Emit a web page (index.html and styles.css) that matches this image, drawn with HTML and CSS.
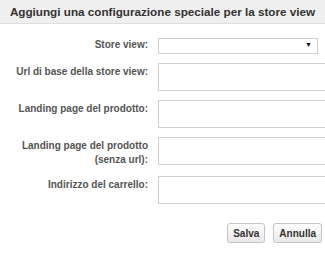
FILE: index.html
```html
<!DOCTYPE html>
<html lang="it">
<head>
    <meta charset="UTF-8">
    <meta name="viewport" content="width=device-width, initial-scale=1.0">
    <title>Store view</title>
    <link rel="stylesheet" href="styles.css">
</head>
<body>
    <div class="dialog">
        <div class="dialog-title">Aggiungi una configurazione speciale per la store view</div>

        <form class="config-form">
            <div class="field-row small">
                <label for="storeView">Store view:</label>
                <div class="select-box" id="storeView">
                    <span class="arrow">&#9660;</span>
                </div>
            </div>
            <div class="field-row">
                <label for="baseUrl">Url di base della store view:</label>
                <input type="text" id="baseUrl">
            </div>
            <div class="field-row">
                <label for="landing">Landing page del prodotto:</label>
                <input type="text" id="landing">
            </div>
            <div class="field-row">
                <label for="landingNoUrl">Landing page del prodotto<br>(senza url):</label>
                <input type="text" id="landingNoUrl">
            </div>
            <div class="field-row">
                <label for="cart">Indirizzo del carrello:</label>
                <input type="text" id="cart">
            </div>

            <div class="buttons">
                <button type="button">Salva</button>
                <button type="button">Annulla</button>
            </div>
        </form>
    </div>
</body>
</html>
```

FILE: styles.css
```css
html, body {
    overflow: hidden;
}
body {
    margin: 0;
    font-family: "Liberation Sans", Arial, sans-serif;
    background: white;
    color: #333;
}
.dialog-title {
    background: #efefef;
    border-bottom: 1px solid #dedede;
    height: 23px;
    line-height: 24px;
    font-size: 11.7px;
    font-weight: bold;
    color: #333;
    text-align: center;
    white-space: nowrap;
}
.config-form {
    padding: 14px 3px 0 0;
    display: flex;
    flex-direction: column;
    gap: 9px;
}
.field-row {
    display: flex;
    align-items: flex-start;
    gap: 10px;
}
.field-row label {
    width: 148px;
    flex-shrink: 0;
    text-align: right;
    font-size: 10px;
    font-weight: bold;
    line-height: 14px;
    padding-top: 2px;
    color: #555;
}
.field-row.small label {
    padding-top: 0;
}
.select-box {
    position: relative;
    width: 158px;
    height: 14px;
    border: 1px solid #cfcfcf;
    background: white;
}
.arrow {
    position: absolute;
    right: 5px;
    top: 2px;
    font-size: 7px;
    color: #111;
}
input[type="text"] {
    width: 175px;
    height: 26px;
    padding: 0;
    margin: 0;
    border: 1px solid #d0d0d0;
    flex-shrink: 0;
}
.buttons {
    display: flex;
    justify-content: flex-end;
    gap: 8px;
    margin-top: 10px;
}
button {
    font-family: "Liberation Sans", Arial, sans-serif;
    font-size: 10px;
    font-weight: bold;
    color: #333;
    height: 20px;
    padding: 0 5px;
    border: 1px solid #c4c4c4;
    border-radius: 3px;
    background: linear-gradient(#fdfdfd, #e9e9e9);
    box-shadow: 0 1px 1px rgba(0, 0, 0, 0.08);
}
```
